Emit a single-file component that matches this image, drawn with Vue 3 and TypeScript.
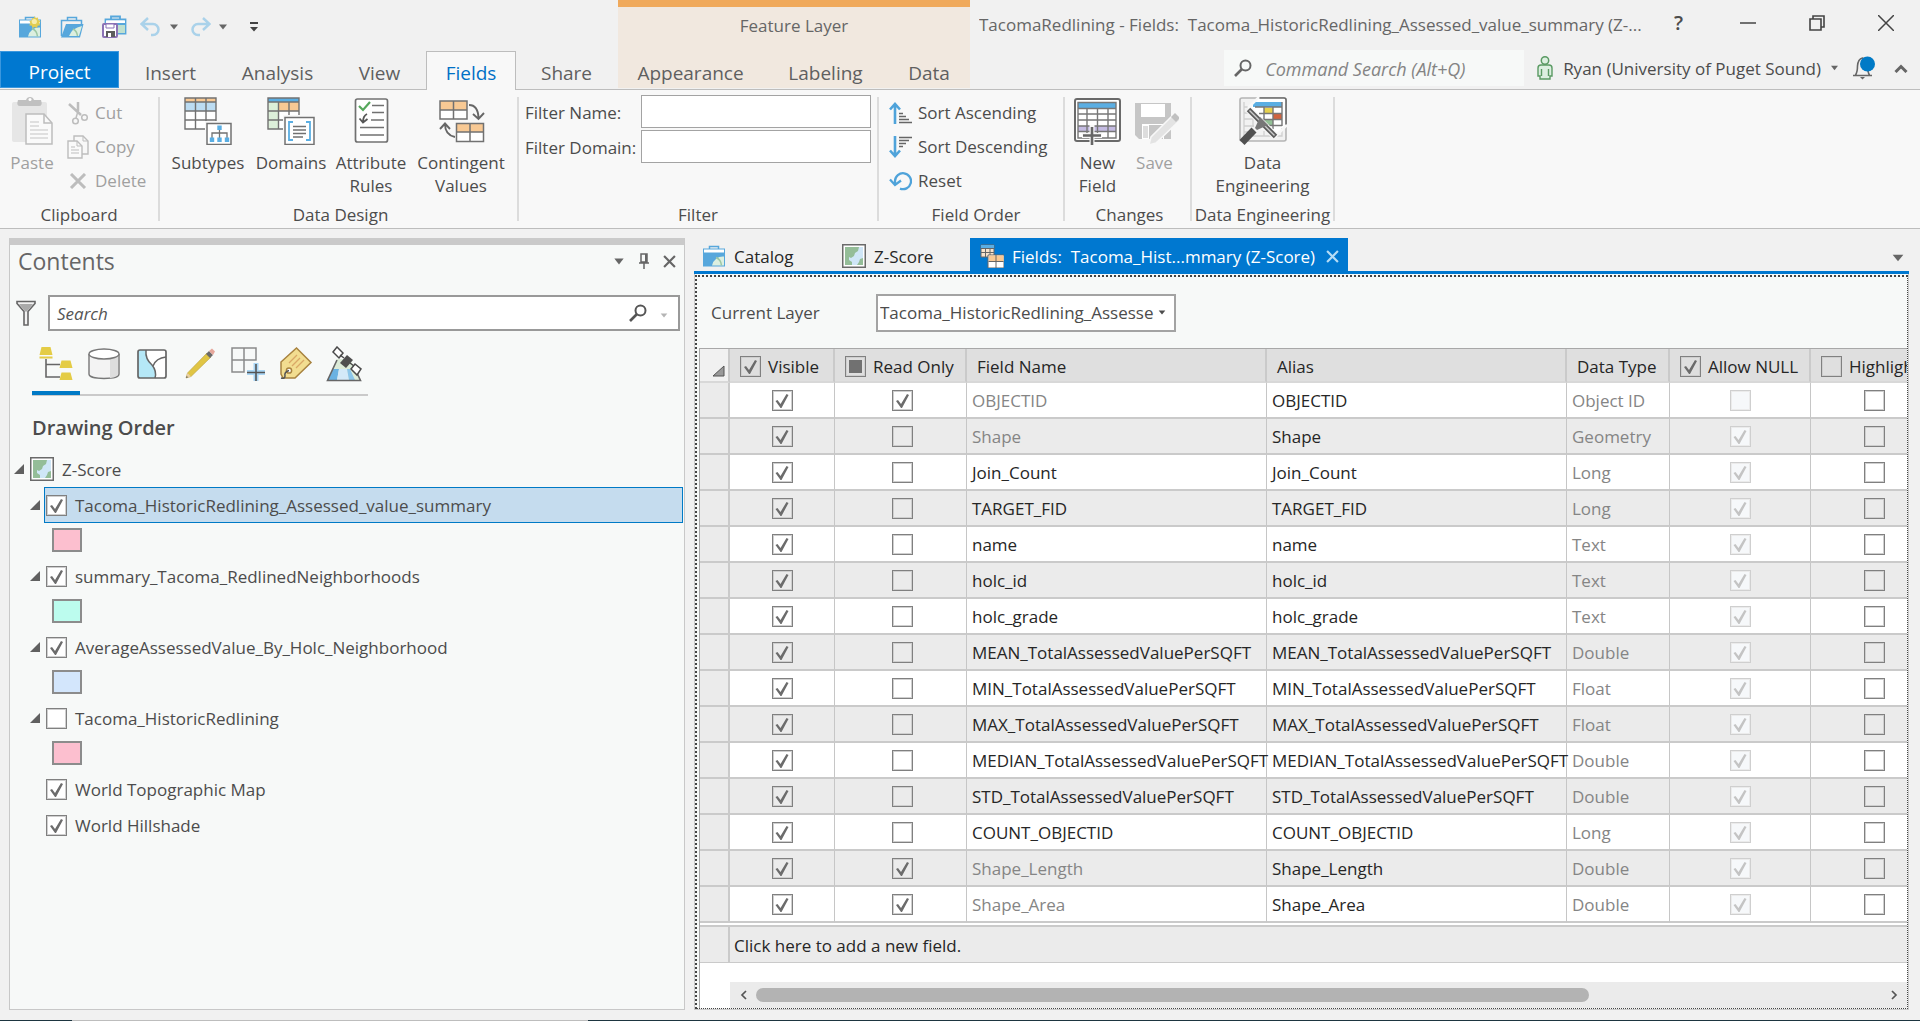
<script setup lang="ts">
import { ref } from 'vue'

interface FieldRow {
  name: string
  alias: string
  type: string
  visible: boolean
  readOnly: boolean
  allowNull: boolean
  highlight: boolean
  locked: boolean
}

interface Layer {
  name: string
  on: boolean
  color?: string
  selected?: boolean
}

const leftTabs = ['Project', 'Insert', 'Analysis', 'View', 'Fields', 'Share']
const contextTabs = ['Appearance', 'Labeling', 'Data']
const activeTab = ref('Fields')

const filterName = ref('')
const filterDomain = ref('')
const commandSearch = ref('')
const contentsSearch = ref('')
const currentLayer = ref('Tacoma_HistoricRedlining_Assesse')

const layers = ref<Layer[]>([
  { name: 'Tacoma_HistoricRedlining_Assessed_value_summary', on: true, color: '#fcbfcf', selected: true },
  { name: 'summary_Tacoma_RedlinedNeighborhoods', on: true, color: '#bcfcee' },
  { name: 'AverageAssessedValue_By_Holc_Neighborhood', on: true, color: '#d3e6fc' },
  { name: 'Tacoma_HistoricRedlining', on: false, color: '#fcbfcf' },
  { name: 'World Topographic Map', on: true },
  { name: 'World Hillshade', on: true },
])

function field(name: string, type: string, readOnly = false, locked = false, allowNull = true): FieldRow {
  return { name, alias: name, type, visible: true, readOnly, allowNull, highlight: false, locked }
}

const fields = ref<FieldRow[]>([
  field('OBJECTID', 'Object ID', true, true, false),
  field('Shape', 'Geometry', false, true),
  field('Join_Count', 'Long'),
  field('TARGET_FID', 'Long'),
  field('name', 'Text'),
  field('holc_id', 'Text'),
  field('holc_grade', 'Text'),
  field('MEAN_TotalAssessedValuePerSQFT', 'Double'),
  field('MIN_TotalAssessedValuePerSQFT', 'Float'),
  field('MAX_TotalAssessedValuePerSQFT', 'Float'),
  field('MEDIAN_TotalAssessedValuePerSQFT', 'Double'),
  field('STD_TotalAssessedValuePerSQFT', 'Double'),
  field('COUNT_OBJECTID', 'Long'),
  field('Shape_Length', 'Double', true, true),
  field('Shape_Area', 'Double', true, true),
])

const allVisible = ref(true)
const allNull = ref(true)
const allHighlight = ref(false)
</script>

<template>
  <div class="app">
    <svg class="sprite" aria-hidden="true">
      <symbol id="caret" viewBox="0 0 8 6"><path d="M0 0.500h8l-4 5z" fill="currentColor" /></symbol>
      <symbol id="expander" viewBox="0 0 10 10"><path d="M10 0v10H0z" fill="currentColor" /></symbol>
      <symbol id="cross" viewBox="0 0 12 12"><path d="M1 1l10 10M11 1L1 11" fill="none" stroke="currentColor" stroke-width="2" /></symbol>
      <symbol id="lens" viewBox="0 0 18 18">
        <circle cx="11.500" cy="6.500" r="5" fill="none" stroke="currentColor" stroke-width="2" />
        <path d="M8 10l-7 7" stroke="currentColor" stroke-width="2.600" />
      </symbol>
      <symbol id="toolbox" viewBox="0 0 24 22">
        <path d="M7.500 4V1.500h9V4" fill="none" stroke="#57a7dc" stroke-width="1.500" />
        <rect x="1" y="3.500" width="22" height="18" fill="#57a7dc" />
        <rect x="2" y="4.500" width="20" height="3" fill="#fff" />
        <path d="M10 20.500a11 11 0 0 1 12-9v9z" fill="#dcefe0" />
        <path d="M14 12.500q5 2 5.500 8" fill="none" stroke="#9cc7a4" stroke-width="1.500" />
      </symbol>
      <symbol id="map" viewBox="0 0 24 24">
        <rect x="0.750" y="0.750" width="22.500" height="22.500" fill="#fff" stroke="#6a6a6a" stroke-width="1.500" />
        <rect x="3" y="3" width="18" height="18" fill="#cfe6f7" />
        <path d="M3 3h14l-1 4-3 2-1 3-3 2-2-1v3l3 2v3H3zM21 14l-3 1-1 3-2 3h6z" fill="#94bd98" />
      </symbol>
    </svg>

    <header class="top">
      <div class="top-left">
        <div class="qat">
          <button class="icon-btn" aria-label="New project">
            <svg width="24" height="22" viewBox="0 0 24 22">
              <use href="#toolbox" />
              <path d="M16 0l1.500 2 2.500-.500 .200 2.500 2.300 1-1.300 2 1 2.300-2.500.500-.700 2.200-2.300-1-2.200 1-.800-2.300-2.500-.500 1.200-2-1-2.200 2.300-.800.300-2.300 2 .500z" fill="#e2cd50" />
              <circle cx="16.300" cy="5.500" r="2.600" fill="#f6ecab" />
            </svg>
          </button>
          <button class="icon-btn" aria-label="Open project">
            <svg width="24" height="22" viewBox="0 0 24 22">
              <path d="M7.500 4V1.500h9V4M1.500 20V4.500h20V9" fill="none" stroke="#57a7dc" stroke-width="1.500" />
              <path d="M1 21.500L6 8h17.500L20 21.500z" fill="#57a7dc" />
              <path d="M9 20q3-8 13-10l-3 10z" fill="#dcefe0" />
              <path d="M13 13q4 2 4.500 7" fill="none" stroke="#9cc7a4" stroke-width="1.500" />
            </svg>
          </button>
          <button class="icon-btn" aria-label="Save project">
            <svg width="25" height="24" viewBox="0 0 25 24">
              <path d="M9 4V1.500h9V4M3.500 9V4.500h20v14H16" fill="none" stroke="#57a7dc" stroke-width="1.800" />
              <path d="M4 5.500h19V8H4z" fill="#fff" /><path d="M16 9h7v9h-7z" fill="#bfe0cf" /><path d="M3 8h20v2H3z" fill="#57a7dc" />
              <rect x="1" y="9" width="14" height="13" rx="1" fill="#fff" stroke="#8b72b5" stroke-width="2" />
              <path d="M4 9h8v4H4z" fill="#fff" stroke="#8b72b5" /><path d="M4 16h9v6H4z" fill="#5c5c5c" /><path d="M6 18h3v4H6z" fill="#fff" />
            </svg>
          </button>
          <button class="icon-btn undo" aria-label="Undo">
            <svg width="22" height="20" viewBox="0 0 22 20"><path d="M8 1L1.500 7 8 13M2 7h11a5.500 5.500 0 0 1 0 11h-2" fill="none" stroke="#aad2ea" stroke-width="2.500" /></svg>
          </button>
          <button class="icon-btn drop" aria-label="Undo list"><svg width="8" height="6"><use href="#caret" /></svg></button>
          <button class="icon-btn redo" aria-label="Redo">
            <svg width="22" height="20" viewBox="0 0 22 20"><path d="M14 1l6.500 6-6.500 6M20 7H9a5.500 5.500 0 0 0 0 11h2" fill="none" stroke="#aad2ea" stroke-width="2.500" /></svg>
          </button>
          <button class="icon-btn drop" aria-label="Redo list"><svg width="8" height="6"><use href="#caret" /></svg></button>
          <button class="icon-btn more" aria-label="Customize toolbar">
            <svg width="8" height="10" viewBox="0 0 8 10"><path d="M0 0h8v2H0zM0 5h8L4 9.500z" fill="#444" /></svg>
          </button>
        </div>
        <nav class="tabs tabs-main">
          <button
            v-for="t in leftTabs"
            :key="t"
            class="tab"
            :class="{ project: t === 'Project', active: t === activeTab }"
            @click="activeTab = t"
          >{{ t }}</button>
        </nav>
      </div>
      <div class="context">
        <div class="context-title">Feature Layer</div>
        <nav class="tabs tabs-context">
          <button v-for="t in contextTabs" :key="t" class="tab" :class="{ active: t === activeTab }" @click="activeTab = t">{{ t }}</button>
        </nav>
      </div>
      <div class="top-right">
        <div class="title-row">
          <div class="title">TacomaRedlining - Fields:&nbsp; Tacoma_HistoricRedlining_Assessed_value_summary (Z-...</div>
          <button class="win help" aria-label="Help">?</button>
          <button class="win" aria-label="Minimize"><svg width="16" height="16"><path d="M0 8h16" stroke="#444" stroke-width="1.500" /></svg></button>
          <button class="win" aria-label="Restore">
            <svg width="16" height="16" viewBox="0 0 16 16"><path d="M1 4h11v11H1zM4 4V1h11v11h-3" fill="none" stroke="#444" stroke-width="1.600" /></svg>
          </button>
          <button class="win" aria-label="Close"><svg width="16" height="16" viewBox="0 0 16 16"><path d="M0 0l16 16M16 0L0 16" stroke="#444" stroke-width="1.500" /></svg></button>
        </div>
        <div class="user-row">
          <label class="command">
            <svg width="18" height="18"><use href="#lens" /></svg>
            <input v-model="commandSearch" type="text" placeholder="Command Search (Alt+Q)" aria-label="Command Search" />
          </label>
          <button class="user">
            <svg width="16" height="24" viewBox="0 0 16 24">
              <circle cx="8" cy="4.500" r="3.700" fill="#dcefe0" stroke="#5a9a63" stroke-width="1.500" />
              <path d="M4 9h8q3 0 3 3v8h-2v3H3v-3H1v-8q0-3 3-3zM4.500 13v7M11.500 13v7" fill="#dcefe0" stroke="#5a9a63" stroke-width="1.400" />
            </svg>
            <span>Ryan (University of Puget Sound)</span>
            <svg class="caret" width="7" height="6"><use href="#caret" /></svg>
          </button>
          <button class="icon-btn" aria-label="Notifications">
            <svg width="24" height="24" viewBox="0 0 24 24">
              <path d="M1 19.500h19M3.500 19q2-3 2-9Q6 3 10.500 2 15 3 15.500 10q0 6 2 9" fill="none" stroke="#666" stroke-width="1.600" />
              <path d="M8 21h5l-2.500 2.500z" fill="#666" /><circle cx="15.500" cy="8" r="7.500" fill="#007ac6" />
            </svg>
          </button>
          <button class="icon-btn collapse" aria-label="Collapse ribbon">
            <svg width="14" height="9" viewBox="0 0 14 9"><path d="M1.500 8L7 2.500 12.500 8" fill="none" stroke="#666" stroke-width="3" /></svg>
          </button>
        </div>
      </div>
    </header>

    <section class="ribbon">
      <div class="group g-clip">
        <div class="tools">
          <button class="big disabled" disabled>
            <svg width="48" height="48" viewBox="0 0 48 48">
              <rect x="4" y="5" width="35" height="40" rx="2" fill="#e6e6e6" />
              <path d="M10 3h8q1-3 4-3t4 3h7q2 6-2 6H12q-4 0-2-6z" fill="#c0c0c0" /><circle cx="22" cy="2.500" r="1.500" fill="#fff" />
              <path d="M18 17h18l8 9v21H18z" fill="#fafafa" stroke="#bdbdbd" stroke-width="1.500" />
              <path d="M36 17v9h8" fill="none" stroke="#bdbdbd" stroke-width="1.500" />
              <path d="M22 25h9M22 29h9M22 33h18M22 37h18M22 41h18" stroke="#c4c4c4" />
            </svg>
            <span>Paste</span>
          </button>
          <div class="stack">
            <button class="small disabled" disabled>
              <svg width="22" height="24" viewBox="0 0 22 24">
                <path d="M2 3l12 11M11 1v9" stroke="#bdbdbd" stroke-width="2.500" /><path d="M11 10l-2 7" stroke="#bdbdbd" stroke-width="1.500" />
                <circle cx="8.500" cy="20" r="2.800" fill="none" stroke="#bdbdbd" stroke-width="1.500" />
                <circle cx="17.500" cy="16.500" r="2.800" fill="none" stroke="#bdbdbd" stroke-width="1.500" />
              </svg>
              <span>Cut</span>
            </button>
            <button class="small disabled" disabled>
              <svg width="22" height="24" viewBox="0 0 22 24">
                <path d="M7 6V1h9l5 5v13h-6" fill="none" stroke="#bdbdbd" stroke-width="1.400" /><path d="M16 1v5h5" fill="none" stroke="#bdbdbd" />
                <path d="M1 6h9l5 5v12H1z" fill="#fafafa" stroke="#bdbdbd" stroke-width="1.400" /><path d="M10 6v5h5M4 12h4M4 15h8M4 18h8" fill="none" stroke="#bdbdbd" />
              </svg>
              <span>Copy</span>
            </button>
            <button class="small disabled" disabled>
              <svg width="22" height="16" viewBox="0 0 22 16"><path d="M4 1l14 14M18 1L4 15" stroke="#bdbdbd" stroke-width="3" /></svg>
              <span>Delete</span>
            </button>
          </div>
        </div>
        <div class="group-name">Clipboard</div>
      </div>

      <div class="group g-design">
        <div class="tools">
          <button class="big">
            <svg width="48" height="48" viewBox="0 0 48 48">
              <path d="M1 1h31v31H1z" fill="#fff" /><path d="M1 1h31v4H1z" fill="#f8c994" /><path d="M1 5h31v9H1z" fill="#bcdcf2" />
              <path d="M11.500 1v31M22 1v31M1 5h31M1 14h31M1 23h31M1 1h31v31H1z" fill="none" stroke="#717171" stroke-width="1.400" />
              <path d="M21 24h27v24H21z" fill="#f8f8f8" />
              <path d="M23 26.500h24v21H23z" fill="#fff" stroke="#717171" stroke-width="1.500" />
              <path d="M35.500 31v10M28 41v-5h15v5" fill="none" stroke="#717171" stroke-width="1.300" />
              <path d="M33.300 28.500h4.400v4.400h-4.400zM25.800 40.500h4.400v4.400h-4.400zM33.300 40.500h4.400v4.400h-4.400zM40.800 40.500h4.400v4.400h-4.400z" fill="#5aaee3" />
            </svg>
            <span>Subtypes</span>
          </button>
          <button class="big">
            <svg width="48" height="48" viewBox="0 0 48 48">
              <path d="M1 1h31v31H1z" fill="#fff" /><path d="M1 1h31v4H1z" fill="#5aaee3" /><path d="M1 5h10.500v27H1z" fill="#dcefd9" /><path d="M11.500 5H32v9H11.500z" fill="#f8c994" />
              <path d="M11.500 5v27M22 5v27M1 5h31M1 14h31M1 23h31M1 1h31v31H1z" fill="none" stroke="#717171" stroke-width="1.400" />
              <path d="M16 18h32v30H16z" fill="#f8f8f8" />
              <path d="M18 20.500h29v27H18z" fill="#fff" stroke="#717171" stroke-width="1.500" />
              <path d="M26 25h-4v18h4M39 25h4v18h-4" fill="none" stroke="#5aaee3" stroke-width="1.800" />
              <path d="M26 29.500h13M26 33h13M26 36.500h13M26 40h10" stroke="#717171" stroke-width="1.300" />
            </svg>
            <span>Domains</span>
          </button>
          <button class="big">
            <svg width="48" height="48" viewBox="0 0 48 48">
              <rect x="8.500" y="2" width="32" height="43" rx="2" fill="#fff" stroke="#717171" stroke-width="1.700" />
              <path d="M12 9l4 4 7-8" fill="none" stroke="#55a75b" stroke-width="2.200" />
              <path d="M25 8.500h12M25 15.500h12M24 23h13M13 30.500h24M13 38h24" stroke="#717171" stroke-width="1.500" />
              <path d="M20 17q-4 2-4 8M12.500 21.500l3.500 4 4.500-3.500" fill="none" stroke="#555" stroke-width="1.800" />
            </svg>
            <span>Attribute<br />Rules</span>
          </button>
          <button class="big">
            <svg width="48" height="48" viewBox="0 0 48 48">
              <path d="M3 4h27v18H3zM19.500 26.500h27v18h-27z" fill="#fff" /><path d="M3 4h27v9H3zM19.500 26.500h27V35h-27z" fill="#f8c994" />
              <path d="M3 4h27v18H3zM3 13h27M16.500 4v18M19.500 26.500h27v18h-27zM19.500 35h27M33 26.500v18" fill="none" stroke="#717171" stroke-width="1.500" />
              <path d="M32 8q9 0 9.500 13M36 17l5.500 5 5.500-6M18 40q-10-2-10-13M3 32l5-5.500 5 5.500" fill="none" stroke="#666" stroke-width="1.900" />
            </svg>
            <span>Contingent<br />Values</span>
          </button>
        </div>
        <div class="group-name">Data Design</div>
      </div>

      <div class="group g-filter">
        <div class="filters">
          <label for="filter-name">Filter Name:</label>
          <input id="filter-name" v-model="filterName" type="text" />
          <label for="filter-domain">Filter Domain:</label>
          <input id="filter-domain" v-model="filterDomain" type="text" />
        </div>
        <div class="group-name">Filter</div>
      </div>

      <div class="group g-order">
        <div class="stack">
          <button class="small">
            <svg width="23" height="22" viewBox="0 0 23 22">
              <path d="M6 22V2M1 7.500L6 2l5 5.500" fill="none" stroke="#4fa3da" stroke-width="2.600" /><path d="M10 11.500h4M10 14.500h7M10 17.500h10M10 20.500h13" stroke="#666" stroke-width="1.400" />
            </svg>
            <span>Sort Ascending</span>
          </button>
          <button class="small">
            <svg width="23" height="22" viewBox="0 0 23 22">
              <path d="M6 0v20M1 14.500L6 20l5-5.500" fill="none" stroke="#4fa3da" stroke-width="2.600" /><path d="M10 1.500h13M10 4.500h10M10 7.500h7M10 10.500h4" stroke="#666" stroke-width="1.400" />
            </svg>
            <span>Sort Descending</span>
          </button>
          <button class="small">
            <svg width="23" height="20" viewBox="0 0 23 20">
              <path d="M6 13.500V10a8 8 0 1 1 5 7.600M1 8.500l5 5.500 6-4.500" fill="none" stroke="#4fa3da" stroke-width="2.300" />
            </svg>
            <span>Reset</span>
          </button>
        </div>
        <div class="group-name">Field Order</div>
      </div>

      <div class="group g-changes">
        <div class="tools">
          <button class="big">
            <svg width="48" height="48" viewBox="0 0 48 48">
              <rect x="1" y="2" width="45" height="42" rx="2" fill="#fff" stroke="#6a6a6a" stroke-width="2" />
              <path d="M4 6h38v5H4z" fill="#5aaee3" /><path d="M4 29h38v5.500H4z" fill="#c4bbe2" />
              <path d="M4 5.500h38v35.500H4zM4 11.500h38M4 17h38M4 23h38M4 29h38M4 34.500h38M13 11.500V41M23.500 11.500V41M34 11.500V41" fill="none" stroke="#777" stroke-width="1.400" />
              <path d="M18 28v20M8 38.500h20" stroke="#f8f8f8" stroke-width="5" /><path d="M18 30v18M9 38.500h18" stroke="#666" stroke-width="2.600" />
            </svg>
            <span>New<br />Field</span>
          </button>
          <button class="big disabled" disabled>
            <svg width="48" height="48" viewBox="0 0 48 48">
              <path d="M4 6h36v36H8l-4-4z" fill="#c6c6c6" /><path d="M10 7h24v13H10zM11 27h22v15H11z" fill="#fff" /><path d="M18 28h14v14H18z" fill="#c6c6c6" /><path d="M12 29h5v12h-5z" fill="#ddd" />
              <path d="M18 48l2-8 23-23 6 6-24 23z" fill="#e3e3e3" stroke="#f8f8f8" stroke-width="1.500" /><path d="M40 20l4-4 5 5-4 4z" fill="#c0c0c0" />
            </svg>
            <span>Save</span>
          </button>
        </div>
        <div class="group-name">Changes</div>
      </div>

      <div class="group g-eng">
        <div class="tools">
          <button class="big">
            <svg width="48" height="48" viewBox="0 0 48 48">
              <rect x="1" y="1" width="46" height="43" rx="2" fill="#f2f2f2" stroke="#b4b4b4" stroke-width="1.600" />
              <path d="M20 1h25q2 0 2 2v27L34 38 11 11z" fill="#fff" />
              <path d="M20 1h25q2 0 2 2v26" fill="none" stroke="#6a6a6a" stroke-width="1.600" />
              <path d="M14 5h29v5H14z" fill="#5aaee3" /><path d="M25 11h9v5h-9z" fill="#e7d24e" /><path d="M34 17h9v5h-9z" fill="#d0633f" /><path d="M25 23h9v5h-9z" fill="#93c096" />
              <path d="M43 5v24M34 10v22M25 10v17M16 10h27M20 16.500h23M22 22.500h21M26 28.500h17" stroke="#777" stroke-width="1.400" />
              <path d="M5 5v34h38V31M5 10h5M5 16h7M5 22h12M5 29h10M5 35h8M14 16v14M25 34v5M34 37v3" fill="none" stroke="#cfcfcf" stroke-width="1.300" />
              <path d="M20 0L9 11M36 40l12-12" stroke="#f8f8f8" stroke-width="2.500" />
              <path d="M9.500 12.500l27 27" stroke="#f8f8f8" stroke-width="7" /><path d="M9.500 12.500l27 27" stroke="#5c5c5c" stroke-width="5" /><path d="M10.500 13.500l25 25" stroke="#ccc" stroke-width="1.500" />
              <path d="M16 31l5-11 8 8-11 5z" fill="#777" /><path d="M3 45.500L15 33" stroke="#505050" stroke-width="7" />
            </svg>
            <span>Data<br />Engineering</span>
          </button>
        </div>
        <div class="group-name">Data Engineering</div>
      </div>
    </section>

    <main class="work">
      <aside class="contents">
        <div class="pane-head">
          <h2>Contents</h2>
          <button class="icon-btn" aria-label="Pane options"><svg width="12" height="7"><use href="#caret" /></svg></button>
          <button class="icon-btn" aria-label="Auto hide">
            <svg width="12" height="16" viewBox="0 0 12 16"><path d="M3 1h6v8H3zM1 10h10M6 10v6" fill="none" stroke="#666" stroke-width="1.500" /><path d="M7 1h2v8H7z" fill="#666" /></svg>
          </button>
          <button class="icon-btn" aria-label="Close pane"><svg width="13" height="13"><use href="#cross" /></svg></button>
        </div>
        <div class="search-row">
          <svg width="20" height="26" viewBox="0 0 20 26"><path d="M1 1.500h18v2l-7 8V25H8V11.500l-7-8z" fill="#f2f2f2" stroke="#666" stroke-width="1.600" /><path d="M3 4h14l-6 7.500H9z" fill="#aaa" /></svg>
          <label class="search">
            <input v-model="contentsSearch" type="text" placeholder="Search" aria-label="Search contents" />
            <svg width="18" height="18"><use href="#lens" /></svg>
            <svg class="faint" width="8" height="5"><use href="#caret" /></svg>
          </label>
        </div>
        <div class="modes">
          <button class="mode on" aria-label="List by drawing order">
            <svg width="36" height="36" viewBox="0 0 36 36"><path d="M8 13v18h14M8 18.500h14" fill="none" stroke="#666" stroke-width="1.600" /><path d="M3.500 1h9l2 8h-13zM1.500 10.500h13v2h-13zM23.500 14.500h9l2 7.500h-13zM23.500 26.500h9l2 7.500h-13z" fill="#e4cc45" /></svg>
          </button>
          <button class="mode" aria-label="List by data source">
            <svg width="36" height="36" viewBox="0 0 36 36"><path d="M3 8v20c0 6 30 6 30 0V8" fill="#f3f3f3" stroke="#777" stroke-width="1.400" /><path d="M24 12v20q8-1 8-4V9z" fill="#ddd" /><ellipse cx="18" cy="8" rx="15" ry="5" fill="#fff" stroke="#777" stroke-width="1.400" /></svg>
          </button>
          <button class="mode" aria-label="List by selection">
            <svg width="36" height="36" viewBox="0 0 36 36"><rect x="4" y="4" width="28" height="28" rx="2" fill="#fff" /><path d="M4 4h8q-1 9 6 15 5 6 3 13H4z" fill="#b5e8f7" /><path d="M12 4q-1 9 6 15 5 6 3 13M19 20q3-8 13-9" fill="none" stroke="#666" stroke-width="1.500" /><rect x="4" y="4" width="28" height="28" rx="2" fill="none" stroke="#666" stroke-width="1.700" /></svg>
          </button>
          <button class="mode" aria-label="List by editing">
            <svg width="36" height="36" viewBox="0 0 36 36"><path d="M4 32l1.500-5L25 7l4 4L9 30.500z" fill="#e0c544" stroke="#b8a040" stroke-width=".600" /><path d="M24 8l3-3 4 4-3 3z" fill="#6a6a6a" /><path d="M27 5l3-2.500 3 3L31 9z" fill="#e6a79b" /><path d="M4 32l1.500-5 3.500 3.500z" fill="#e9cfa2" /><path d="M4 32l.700-2 1.300 1.300z" fill="#555" /></svg>
          </button>
          <button class="mode" aria-label="List by snapping">
            <svg width="36" height="36" viewBox="0 0 36 36"><path d="M2 2h24v12H2zM2 2v24h12V2" fill="none" stroke="#8a8a8a" stroke-width="1.500" /><path d="M26 17v18M17 26.500h18" stroke="#a9d6f5" stroke-width="5" /><path d="M26 18v17M17 26.500h18" stroke="#555" stroke-width="1.600" /></svg>
          </button>
          <button class="mode" aria-label="List by labeling">
            <svg width="36" height="36" viewBox="0 0 36 36"><path d="M3 16L18.500 2 33 16.500 17 32H5l-2-4z" fill="#f2dd90" stroke="#a88340" stroke-width="1.500" /><path d="M11 17l8-8M14 20l8-8M18 22l8-8" stroke="#d9a866" stroke-width="1.300" /><circle cx="11" cy="24.500" r="2.600" fill="#fff" stroke="#a88340" stroke-width="1.500" /><path d="M11 24.500Q6 26 7 30q0 3-4 2" fill="none" stroke="#555" stroke-width="1.500" /></svg>
          </button>
          <button class="mode" aria-label="List by imagery">
            <svg width="36" height="36" viewBox="0 0 36 36"><path d="M1 35L11 13h13l11 22z" fill="#dcebd8" /><path d="M7 23h6l-2 11H2z" fill="#6ab2e2" /><path d="M13 23h8l2 11H11z" fill="#d3e9f8" /><path d="M21 23h3l5 11h-6z" fill="#8cc6ea" /><path d="M11 14L1.500 34.500h33L31 27" fill="none" stroke="#666" stroke-width="1.600" /><path d="M7 6l4-5 6 6-4 5zM25 23l4-5 6 5-4 6z" fill="#fff" stroke="#4a4a4a" stroke-width="1.500" /><path d="M14 17l7-8 6 5-7 8z" fill="#4f4f4f" /><path d="M14 9l4 3M24 17l4 3" stroke="#4a4a4a" stroke-width="1.500" /></svg>
          </button>
        </div>
        <h3>Drawing Order</h3>
        <div class="map-row">
          <svg class="expander" width="10" height="10"><use href="#expander" /></svg>
          <svg width="24" height="24"><use href="#map" /></svg>
          <span>Z-Score</span>
        </div>
        <ul class="layers">
          <li v-for="layer in layers" :key="layer.name">
            <div class="layer">
              <svg v-if="layer.color" class="expander" width="10" height="10"><use href="#expander" /></svg>
              <label class="layer-label" :class="{ selected: layer.selected }">
                <input v-model="layer.on" type="checkbox" class="check" />
                <span>{{ layer.name }}</span>
              </label>
            </div>
            <div v-if="layer.color" class="symbol-row"><span class="swatch" :style="{ backgroundColor: layer.color }"></span></div>
          </li>
        </ul>
      </aside>

      <section class="docs">
        <div class="doc-tabs">
          <button class="doc-tab catalog"><svg width="24" height="22"><use href="#toolbox" /></svg><span>Catalog</span></button>
          <button class="doc-tab"><svg width="24" height="24"><use href="#map" /></svg><span>Z-Score</span></button>
          <div class="doc-tab current">
            <svg width="24" height="24" viewBox="0 0 24 24">
              <path d="M1 1h13v12H1z" fill="#f8e3cb" stroke="#666" /><path d="M1 1h13v3H1z" fill="#5aaee3" /><path d="M1 4.500h13M1 8.500h13M5.500 4v9M10 4v9" stroke="#666" />
              <path d="M8 11h16v13H8z" fill="#fff" stroke="#666" /><path d="M9 11.500h14.500V17H9z" fill="#f8c994" /><path d="M8.500 17.500h15M16 11v13" stroke="#666" />
            </svg>
            <span>Fields:&nbsp; Tacoma_Hist...mmary (Z-Score)</span>
            <button class="icon-btn" aria-label="Close tab"><svg width="13" height="13"><use href="#cross" /></svg></button>
          </div>
          <button class="icon-btn tab-list" aria-label="Open views"><svg width="12" height="8"><use href="#caret" /></svg></button>
        </div>
        <div class="doc-frame">
          <div class="doc-body">
            <div class="current-layer">
              <label for="layer-select">Current Layer</label>
              <div class="select-box">
                <select id="layer-select" v-model="currentLayer"><option>Tacoma_HistoricRedlining_Assesse</option></select>
                <svg width="8" height="5"><use href="#caret" /></svg>
              </div>
            </div>
            <div class="grid">
              <div class="grid-scroll">
                <table>
                  <colgroup>
                    <col class="c-row" /><col class="c-vis" /><col class="c-ro" /><col class="c-text" /><col class="c-text" /><col class="c-type" /><col class="c-null" /><col class="c-high" />
                  </colgroup>
                  <thead>
                    <tr>
                      <th class="corner"><svg width="13" height="12" viewBox="0 0 13 12"><path d="M12 1v10H1z" fill="#999" stroke="#555" /></svg></th>
                      <th><label><input v-model="allVisible" type="checkbox" class="check" />Visible</label></th>
                      <th><label><input type="checkbox" class="check" :indeterminate="true" />Read Only</label></th>
                      <th class="plain">Field Name</th>
                      <th class="plain">Alias</th>
                      <th class="plain">Data Type</th>
                      <th><label><input v-model="allNull" type="checkbox" class="check" />Allow NULL</label></th>
                      <th><label><input v-model="allHighlight" type="checkbox" class="check" />Highlight</label></th>
                    </tr>
                  </thead>
                  <tbody>
                    <tr v-for="f in fields" :key="f.name">
                      <td class="row-head"></td>
                      <td class="mid"><input v-model="f.visible" type="checkbox" class="check" :aria-label="`${f.name} visible`" /></td>
                      <td class="mid ro"><input v-model="f.readOnly" type="checkbox" class="check" :aria-label="`${f.name} read only`" /></td>
                      <td :class="{ dim: f.locked }">{{ f.name }}</td>
                      <td>{{ f.alias }}</td>
                      <td class="dim">{{ f.type }}</td>
                      <td class="mid"><input v-model="f.allowNull" type="checkbox" class="check" disabled :aria-label="`${f.name} allow null`" /></td>
                      <td class="mid"><input v-model="f.highlight" type="checkbox" class="check" :aria-label="`${f.name} highlight`" /></td>
                    </tr>
                  </tbody>
                </table>
              </div>
              <div class="add-row"><div class="row-head"></div><button>Click here to add a new field.</button></div>
              <div class="filler"></div>
              <div class="hscroll">
                <button class="icon-btn" aria-label="Scroll left"><svg width="7" height="10" viewBox="0 0 7 10"><path d="M6 1L2 5l4 4" fill="none" stroke="#555" stroke-width="1.700" /></svg></button>
                <div class="track"><div class="thumb"></div></div>
                <button class="icon-btn" aria-label="Scroll right"><svg width="7" height="10" viewBox="0 0 7 10"><path d="M1 1l4 4-4 4" fill="none" stroke="#555" stroke-width="1.700" /></svg></button>
              </div>
            </div>
          </div>
        </div>
      </section>
    </main>
    <div class="taskbar-edge"></div>
  </div>
</template>

<style>
body {
  margin: 0;
  background: #f1f1f1;
}
</style>

<style scoped>
.app {
  display: flex;
  flex-direction: column;
  min-height: 100vh;
  overflow: hidden;
  background: #f1f1f1;
  color: #4c4c4c;
  font: 17px/24px "Open Sans", "Noto Sans", sans-serif;
}
.app *,
.app *::before {
  box-sizing: border-box;
}
.sprite {
  position: absolute;
  width: 0;
  height: 0;
}
svg {
  display: block;
  flex: none;
}
button,
input,
select {
  margin: 0;
  padding: 0;
  border: 0;
  border-radius: 0;
  background: none;
  color: inherit;
  font: inherit;
}
button {
  white-space: nowrap;
}
input::placeholder {
  color: inherit;
  font-style: italic;
  opacity: 1;
}
.icon-btn {
  display: flex;
  align-items: center;
  justify-content: center;
  color: #666;
}

/* Title bar and ribbon tabs */
.top {
  display: flex;
  height: 90px;
  border-bottom: 1px solid #bdbdbd;
}
.top-left {
  flex: none;
  width: 618px;
}
.qat {
  display: flex;
  align-items: center;
  gap: 18px;
  height: 51px;
  padding: 3px 0 0 18px;
}
.qat .undo {
  margin-left: -5px;
}
.qat .redo {
  margin-left: -7px;
}
.qat .drop {
  margin-left: -10px;
}
.qat .more {
  margin-left: 5px;
}
.tabs {
  display: grid;
  height: 39px;
  font-size: 19px;
}
.tabs-main {
  grid-template-columns: 119px 103px 111px 93px 90px 101px;
}
.tabs-context {
  grid-template-columns: 145px 125px 82px;
}
.tab {
  padding-top: 4px;
  color: #5f5f5f;
}
.tab.project {
  margin-bottom: 2px;
  border: 1px solid #3b97de;
  background: #0078d0;
  color: #fff;
}
.tab.active {
  border: 1px solid #bdbdbd;
  border-bottom: 0;
  background: #f8f8f8;
  color: #0070c6;
}
.context {
  flex: none;
  width: 352px;
  height: 88px;
  border-top: 7px solid #f0a95b;
  background: #f1e8df;
}
.context-title {
  height: 44px;
  padding-top: 7px;
  text-align: center;
  color: #666;
}
.top-right {
  flex: 1;
  min-width: 0;
}
.title-row {
  display: flex;
  align-items: center;
  height: 50px;
  padding-left: 9px;
}
.title {
  flex: 1;
  min-width: 0;
  overflow: hidden;
  color: #666;
  white-space: nowrap;
}
.win {
  display: flex;
  flex: none;
  align-items: center;
  justify-content: center;
  width: 69px;
  height: 45px;
}
.title-row .win {
  margin-top: -4px;
}
.help {
  font-size: 20px;
  font-weight: 600;
}
.user-row {
  display: flex;
  align-items: center;
  justify-content: flex-end;
  height: 36px;
  padding-right: 12px;
}
.command {
  display: flex;
  align-items: center;
  gap: 13px;
  width: 300px;
  height: 36px;
  margin-right: 13px;
  padding-left: 10px;
  background: #f7f9f8;
  color: #666;
}
.command input {
  flex: 1;
  min-width: 0;
  padding-top: 2px;
  color: #848484;
  font-size: 18px;
}
.user {
  display: flex;
  align-items: center;
  gap: 10px;
  margin-right: 14px;
}
.user span {
  padding-top: 2px;
}
.user .caret {
  color: #666;
}
.collapse {
  margin-left: 18px;
}

/* Ribbon */
.ribbon {
  display: flex;
  height: 139px;
  border-bottom: 1px solid #bdbdbd;
  background: #f8f8f8;
}
.group {
  display: flex;
  flex: none;
  flex-direction: column;
  justify-content: space-between;
  margin: 7px 0;
  border-right: 2px solid #dcdcdc;
}
.g-clip { width: 160px; }
.g-design { width: 359px; padding-left: 4px; }
.g-filter { width: 360px; }
.g-order { width: 186px; padding-left: 10px; }
.g-changes { width: 127px; padding-left: 4px; }
.g-eng { width: 143px; }
.group-name {
  height: 18px;
  text-align: center;
  white-space: nowrap;
}
.tools {
  display: flex;
}
.big {
  display: flex;
  flex-direction: column;
  align-items: center;
  gap: 6px;
  line-height: 23px;
}
.g-clip .big { width: 64px; }
.g-design .tools {
  display: grid;
  grid-template-columns: 88px 78px 82px 98px;
}
.g-changes .big { width: 57px; }
.g-eng .big { width: 100%; }
.disabled {
  color: #a0a0a0;
}
.stack {
  display: flex;
  flex-direction: column;
  margin-top: -1px;
}
.g-clip .stack {
  padding-left: 3px;
}
.small {
  display: flex;
  align-items: center;
  gap: 6px;
  height: 34px;
}
.filters {
  display: grid;
  grid-template-columns: 116px 230px;
  gap: 2px 0;
  align-items: center;
  padding-left: 6px;
  margin-top: -2px;
  white-space: nowrap;
}
.filters label {
  padding-top: 2px;
}
.filters input {
  height: 33px;
  padding: 0 6px;
  border: 1px solid #a3a3a3;
  background: #fff;
}

/* Workspace */
.work {
  display: flex;
  flex: 1;
  gap: 9px;
  padding: 9px 11px 10px 9px;
}
.contents {
  flex: none;
  width: 676px;
  border: 1px solid #c8c8c8;
  border-top: 7px solid #cacaca;
  background: #f7f9f8;
}
.pane-head {
  display: flex;
  align-items: center;
  gap: 13px;
  height: 32px;
  padding: 0 8px 0 8px;
}
.pane-head h2 {
  flex: 1;
  margin: 0;
  color: #666;
  font-size: 23px;
  font-weight: 400;
}
.search-row {
  display: flex;
  align-items: center;
  gap: 12px;
  padding: 18px 4px 0 6px;
}
.search {
  display: flex;
  flex: 1;
  align-items: center;
  gap: 13px;
  height: 36px;
  padding: 0 10px 0 7px;
  border: 2px solid #999;
  background: #fff;
  color: #555;
}
.search input {
  flex: 1;
  min-width: 0;
  padding-top: 1px;
}
.faint {
  margin-top: 4px;
  color: #b5b5b5;
}
.modes {
  display: inline-flex;
  margin: 6px 0 0 22px;
  border-bottom: 2px solid #cacaca;
}
.mode {
  display: flex;
  align-items: center;
  justify-content: center;
  width: 48px;
  height: 58px;
  margin-bottom: -1px;
  padding-bottom: 4px;
}
.mode.on {
  border-bottom: 4px solid #007ac6;
  padding-bottom: 0;
}
.contents h3 {
  margin: 20px 0 0 22px;
  font-size: 20px;
  font-weight: 600;
}
.map-row {
  display: flex;
  align-items: center;
  gap: 6px;
  height: 36px;
  padding-left: 4px;
  margin-top: 11px;
}
.map-row span {
  padding: 1px 0 0 2px;
}
.expander {
  color: #606060;
}
.layers {
  margin: 0;
  padding: 0;
  list-style: none;
}
.layer {
  display: flex;
  align-items: center;
  justify-content: flex-end;
  gap: 4px;
  height: 36px;
  padding-right: 1px;
}
.layer-label {
  display: flex;
  flex: none;
  align-items: center;
  gap: 8px;
  width: 639px;
  height: 36px;
  padding: 1px 0 0 1px;
  border: 1px solid transparent;
}
.layer-label.selected {
  border-color: #007ac6;
  background: #c5dcee;
}
.symbol-row {
  display: flex;
  align-items: center;
  height: 35px;
  padding: 0 0 2px 42px;
}
.swatch {
  width: 30px;
  height: 24px;
  border: 2px solid #8c8c8c;
}

/* Checkboxes */
.check {
  position: relative;
  flex: none;
  width: 21px;
  height: 21px;
  border: 1px solid #808080;
  box-shadow: inset 0 0 0 1px #cfcfcf;
  appearance: none;
}
.layer-label .check {
  background: #fff;
}
.check:checked::before {
  content: "";
  display: block;
  width: 19px;
  height: 19px;
  background: #6c6c6c;
  clip-path: polygon(3px 10px, 5px 9px, 8px 13px, 14px 3px, 16px 4px, 9px 17px, 8px 17px);
}
.check:indeterminate::before {
  content: "";
  display: block;
  width: 13px;
  height: 13px;
  margin: 3px;
  background: #717171;
}
.check:disabled {
  border-color: #cfcfcf;
  background: #f6f8fa;
  box-shadow: inset 0 0 0 1px #ebebeb;
}
.check:disabled::before {
  background: #c4c4c4;
}

/* Document area */
.docs {
  display: flex;
  flex: 1;
  flex-direction: column;
  min-width: 0;
}
.doc-tabs {
  display: flex;
  height: 36px;
  border-bottom: 3px solid #0078d0;
  color: #262626;
}
.doc-tab {
  display: flex;
  flex: none;
  align-items: center;
  gap: 8px;
  width: 137px;
  padding: 3px 0 0 9px;
  white-space: nowrap;
}
.doc-tab.catalog {
  width: 139px;
}
.doc-tab.catalog svg {
  margin-left: -1px;
}
.doc-tab span {
  padding-top: 2px;
}
.doc-tab.current {
  width: 378px;
  padding: 3px 9px 0 10px;
  background: #0078d0;
  color: #fff;
}
.doc-tab.current span {
  flex: 1;
}
.doc-tab .icon-btn {
  color: #b5dcf5;
}
.tab-list {
  margin-left: auto;
  padding: 6px 5px 0 0;
}
.doc-frame {
  display: flex;
  flex: 1;
  border: 1px solid #cacaca;
  border-top: 0;
  background: #f7f9f8;
}
.doc-body {
  display: flex;
  flex: 1;
  flex-direction: column;
  min-width: 0;
  margin-top: 1px;
  border: dotted #444;
  border-width: 2px 1px 1px 2px;
}
.current-layer {
  display: grid;
  grid-template-columns: 165px 300px;
  align-items: center;
  height: 71px;
  padding-left: 14px;
}
.select-box {
  display: flex;
  align-items: center;
  height: 38px;
  padding-right: 8px;
  border: 2px solid #a3a3a3;
  background: #fff;
}
.select-box select {
  flex: 1;
  min-width: 0;
  height: 100%;
  padding-left: 2px;
  appearance: none;
}
.grid {
  display: flex;
  flex: 1;
  flex-direction: column;
  min-width: 0;
  border-top: 1px solid #a8a8a8;
  border-left: 1px solid #a8a8a8;
  margin-left: 2px;
  background: #fff;
}
.grid-scroll {
  overflow: hidden;
}
table {
  width: 1238px;
  border-collapse: separate;
  border-spacing: 0;
  table-layout: fixed;
  color: #262626;
}
.c-row { width: 30px; }
.c-vis { width: 105px; }
.c-ro { width: 132px; }
.c-text { width: 300px; }
.c-type { width: 103px; }
.c-null { width: 141px; }
.c-high { width: 127px; }
th,
td {
  padding: 1px 0 0 5px;
  text-align: left;
  font-weight: 400;
  white-space: nowrap;
}
th {
  height: 34px;
  padding-top: 3px;
  border-right: 2px solid #cacaca;
  border-bottom: 2px solid #d8d8d8;
  background: #dfdfdf;
}
th.corner {
  padding: 12px 3px 0 0;
  background: #f1f1f1;
}
.corner svg {
  margin-left: auto;
}
th label {
  display: flex;
  align-items: center;
  gap: 7px;
  padding-left: 5px;
}
th.plain {
  padding-left: 10px;
}
td {
  height: 36px;
  border-right: 1px solid #c6c6c6;
  border-bottom: 2px solid #cacaca;
}
tbody tr:nth-child(even) td,
td.row-head {
  background: #ebebeb;
}
td.row-head,
.add-row .row-head {
  border-right: 2px solid #cacaca;
}
td.mid {
  padding: 1px 0 0;
  text-align: center;
}
td.ro {
  padding-left: 4px;
}
td .check {
  display: block;
  margin: 0 auto;
}
td.dim {
  color: #858585;
}
.add-row {
  display: flex;
  height: 38px;
  border-top: 2px solid #cacaca;
  border-bottom: 1px solid #cacaca;
  margin-top: 2px;
  background: #ebebeb;
  color: #262626;
}
.add-row .row-head {
  width: 30px;
}
.add-row button {
  flex: 1;
  padding: 2px 0 0 4px;
  text-align: left;
}
.filler {
  flex: 1;
  min-height: 19px;
}
.hscroll {
  display: flex;
  align-items: center;
  height: 26px;
  margin-left: 30px;
  background: #ebebeb;
}
.hscroll .icon-btn {
  width: 26px;
  height: 25px;
}
.track {
  flex: 1;
}
.thumb {
  width: 74%;
  height: 14px;
  border-radius: 7px;
  background: #b3b3b3;
}
.taskbar-edge {
  height: 1px;
  background: linear-gradient(to right, #1d3540 72px, #bdbdbd 72px 588px, #1d3540 588px);
}
</style>
